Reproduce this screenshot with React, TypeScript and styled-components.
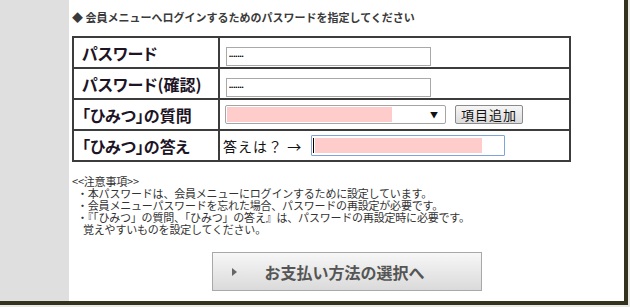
import React from 'react';
import styled, { createGlobalStyle } from 'styled-components';

const GlobalStyle = createGlobalStyle`
  html, body {
    margin: 0;
    padding: 0;
    background: #ececec;
  }
  body {
    font-family: "Noto Sans CJK JP", "Noto Sans", sans-serif;
  }
`;

const Shot = styled.div`
  width: 630px;
  height: 307px;
  background: #e9e9e6;
  overflow: hidden;
`;

const Frame = styled.div`
  width: 624px;
  height: 301px;
  display: flex;
  border-right: 4px solid #33331f;
  border-bottom: 4px solid #33331f;
`;

const Sidebar = styled.div`
  width: 69px;
  background: #dfdfdf;
`;

const Main = styled.div`
  flex: 1;
  background: #fff;
  padding: 9px 0 0 3px;
  display: flex;
  flex-direction: column;
`;

const Heading = styled.div`
  font-size: 11px;
  font-weight: 700;
  color: #3a3a3a;
  line-height: 16px;
  height: 16px;
`;

const FormTable = styled.table`
  margin-top: 11px;
  width: 499px;
  border-collapse: collapse;
  border: 2px solid #3c3c3c;
`;

const Label = styled.td`
  width: 136px;
  height: 29px;
  padding: 0 0 0 8px;
  border: 2px solid #3c3c3c;
  font-size: 16px;
  font-weight: 700;
  color: #1d1426;
  white-space: nowrap;
  font-feature-settings: "palt";
`;

const Value = styled.td`
  height: 29px;
  padding: 0 0 0 5px;
  border: 2px solid #3c3c3c;
`;

const Cell = styled.div`
  display: flex;
  align-items: center;
  gap: 9px;
`;

const PasswordInput = styled.input`
  box-sizing: border-box;
  width: 205px;
  height: 19px;
  margin: 0 0 0 1px;
  padding: 0 2px;
  border: 1px solid #a9a9a9;
  font-size: 6px;
  color: #000;
  outline: none;
`;

const SelectBox = styled.div`
  box-sizing: border-box;
  width: 221px;
  height: 19px;
  border: 1px solid #a5a5a5;
  border-radius: 2px;
  display: flex;
  align-items: stretch;
  padding: 1px;
`;

const Redacted = styled.div<{ $w: number }>`
  width: ${(p) => p.$w}px;
  background: #ffcccc;
`;

const Arrow = styled.span`
  margin-left: auto;
  margin-right: 6px;
  font-size: 8px;
  line-height: 15px;
  color: #111;
`;

const SmallButton = styled.button`
  box-sizing: border-box;
  width: 68px;
  height: 19px;
  padding: 0;
  border: 1px solid #8b8b8b;
  border-radius: 2px;
  background: linear-gradient(#f6f6f6, #dcdcdc);
  font-family: "Noto Sans CJK JP", sans-serif;
  font-size: 13px;
  line-height: 16px;
  color: #111;
  letter-spacing: 1px;
`;

const Prompt = styled.span`
  font-size: 14px;
  color: #111;
  margin-left: -2px;
  letter-spacing: 1px;
`;

const AnswerBox = styled.div`
  box-sizing: border-box;
  width: 194px;
  height: 21px;
  border: 1px solid #7ea5d6;
  border-radius: 1px;
  display: flex;
  align-items: stretch;
  padding: 2px 2px 2px 1px;
`;

const Caret = styled.span`
  width: 1px;
  background: #000;
  margin-right: 1px;
`;

const Notes = styled.div`
  margin-top: 13px;
  font-size: 11px;
  line-height: 12px;
  color: #333;
  letter-spacing: -0.2px;
`;

const NoteLine = styled.div<{ $indent: number }>`
  padding-left: ${(p) => p.$indent}px;
  white-space: nowrap;
`;

const Footer = styled.div`
  margin-top: 17px;
  display: flex;
  justify-content: center;
  padding-right: 3px;
`;

const NextButton = styled.button`
  box-sizing: border-box;
  width: 270px;
  height: 39px;
  border: 1px solid #a8a8a8;
  background: linear-gradient(#f7f7f7, #dadada);
  display: flex;
  align-items: center;
  padding: 0 0 0 19px;
  font-family: "Noto Sans CJK JP", sans-serif;
  font-size: 16px;
  font-weight: 700;
  color: #555;
  cursor: pointer;
`;

const Play = styled.span`
  width: 0;
  height: 0;
  border-left: 5px solid #666;
  border-top: 4px solid transparent;
  border-bottom: 4px solid transparent;
  margin-right: 28px;
`;

export default function App() {
  return (
    <Shot>
      <GlobalStyle />
      <Frame>
        <Sidebar />
        <Main>
          <Heading>◆ 会員メニューへログインするためのパスワードを指定してください</Heading>
          <FormTable>
            <tbody>
              <tr>
                <Label>パスワード</Label>
                <Value>
                  <PasswordInput type="password" defaultValue="abcdefg" readOnly />
                </Value>
              </tr>
              <tr>
                <Label>パスワード(確認)</Label>
                <Value>
                  <PasswordInput type="password" defaultValue="abcdefg" readOnly />
                </Value>
              </tr>
              <tr>
                <Label>「ひみつ」の質問</Label>
                <Value>
                  <Cell>
                    <SelectBox>
                      <Redacted $w={165} />
                      <Arrow>▼</Arrow>
                    </SelectBox>
                    <SmallButton type="button">項目追加</SmallButton>
                  </Cell>
                </Value>
              </tr>
              <tr>
                <Label>「ひみつ」の答え</Label>
                <Value>
                  <Cell>
                    <Prompt>答えは？ →</Prompt>
                    <AnswerBox>
                      <Caret />
                      <Redacted $w={167} />
                    </AnswerBox>
                  </Cell>
                </Value>
              </tr>
            </tbody>
          </FormTable>
          <Notes>
            <NoteLine $indent={0}>&lt;&lt;注意事項&gt;&gt;</NoteLine>
            <NoteLine $indent={5}>・本パスワードは、会員メニューにログインするために設定しています。</NoteLine>
            <NoteLine $indent={5}>・会員メニューパスワードを忘れた場合、パスワードの再設定が必要です。</NoteLine>
            <NoteLine $indent={5}>・『「ひみつ」の質問、「ひみつ」の答え』は、パスワードの再設定時に必要です。</NoteLine>
            <NoteLine $indent={11}>覚えやすいものを設定してください。</NoteLine>
          </Notes>
          <Footer>
            <NextButton type="button">
              <Play />
              お支払い方法の選択へ
            </NextButton>
          </Footer>
        </Main>
      </Frame>
    </Shot>
  );
}
